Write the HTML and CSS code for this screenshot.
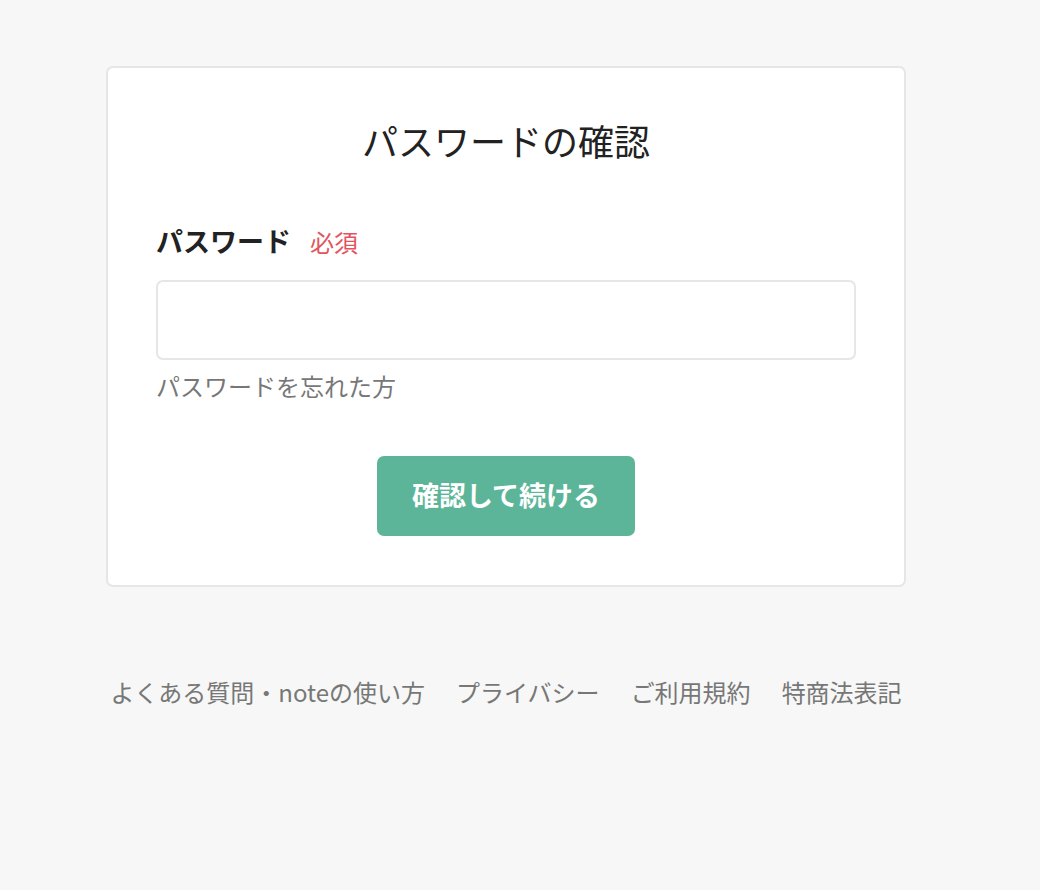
FILE: index.html
```html
<!DOCTYPE html>
<html lang="ja">
<head>
<meta charset="utf-8">
<title>パスワードの確認</title>
<link rel="stylesheet" href="styles.css">
</head>
<body>
<div class="page">
  <main class="card">
    <h1 class="title">パスワードの確認</h1>
    <form class="form">
      <div class="label-row">
        <label class="label" for="pw">パスワード</label>
        <span class="required">必須</span>
      </div>
      <input class="input" id="pw" type="password">
      <a class="forgot" href="#">パスワードを忘れた方</a>
      <div class="actions">
        <button class="btn" type="button">確認して続ける</button>
      </div>
    </form>
  </main>
  <footer class="footer">
    <a href="#">よくある質問・noteの使い方</a>
    <a href="#">プライバシー</a>
    <a href="#">ご利用規約</a>
    <a href="#">特商法表記</a>
  </footer>
</div>
</body>
</html>
```
FILE: styles.css
```css
* { box-sizing: border-box; }
html, body {
  margin: 0;
  padding: 0;
  background: #f6f7f6;
}
body {
  font-family: "Noto Sans CJK JP", "Noto Sans", sans-serif;
  color: #222;
}
.page {
  width: 800px;
  margin-left: 106px;
  padding-top: 66px;
}
.card {
  background: #fff;
  border: 2px solid #e6e6e6;
  border-radius: 7px;
  padding: 48px 48px 49px;
}
.title {
  margin: 0;
  font-size: 36px;
  line-height: 48px;
  font-weight: 400;
  text-align: center;
  color: #222;
}
.form {
  display: flex;
  flex-direction: column;
  margin-top: 57px;
}
.label-row {
  display: flex;
  align-items: baseline;
  gap: 19px;
  line-height: 40px;
}
.label {
  font-size: 27px;
  font-weight: 700;
  color: #222;
}
.required {
  font-size: 24px;
  color: #e3545c;
}
.input {
  margin-top: 18px;
  width: 700px;
  height: 80px;
  border: 2px solid #e6e6e6;
  border-radius: 7px;
  background: #fff;
  outline: none;
  padding: 0 18px;
  font-size: 24px;
}
.forgot {
  align-self: flex-start;
  margin-top: 8px;
  font-size: 24px;
  line-height: 36px;
  color: #777;
  text-decoration: none;
}
.actions {
  display: flex;
  justify-content: center;
  margin-top: 52px;
}
.btn {
  height: 80px;
  padding: 0 35px 4px;
  border: none;
  border-radius: 7px;
  background: #5cb598;
  color: #fff;
  font-family: inherit;
  font-size: 27px;
  font-weight: 700;
  line-height: 1;
}
.footer {
  display: flex;
  justify-content: center;
  gap: 31px;
  margin-top: 87px;
  font-size: 24px;
  line-height: 36px;
}
.footer a {
  color: #777;
  text-decoration: none;
}
```
